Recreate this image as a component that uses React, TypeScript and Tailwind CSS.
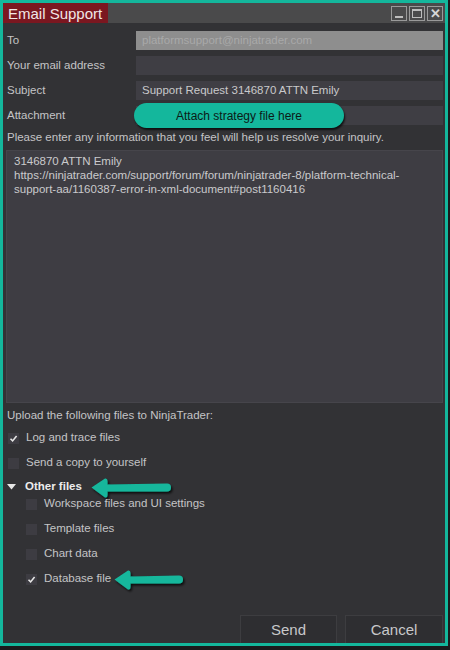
import React from "react";

const font = { fontFamily: '"Liberation Sans", Arial, sans-serif' };

// teal callout arrow pointing left, with a soft drop shadow
function Arrow({ w }: { w: number }) {
  return (
    <svg width={w} height={22} viewBox={`0 0 ${w} 22`} className="overflow-visible">
      <defs>
        <filter id="sh" x="-20%" y="-40%" width="140%" height="180%">
          <feDropShadow dx="1.5" dy="2" stdDeviation="1.2" floodColor="#000" floodOpacity="0.75" />
        </filter>
      </defs>
      <path
        filter="url(#sh)"
        fill="#14b79c"
        d={`M0.5 10.5 L14 1.5 Q16.5 1 16.5 4 L16.5 7.5 L${w - 4} 6.5 Q${w} 6.5 ${w} 10.5 Q${w} 14.5 ${w - 4} 14.5 L16.5 14.5 L16.5 18 Q16.5 21 14 20.5 Z`}
      />
    </svg>
  );
}

function Check({ checked }: { checked?: boolean }) {
  return (
    <span className="flex h-[11px] w-[11px] items-center justify-center bg-[#3d3c42]">
      {checked && (
        <svg width="9" height="9" viewBox="0 0 9 9">
          <path d="M1.5 4.8 L3.6 6.9 L7.6 2" fill="none" stroke="#e6e6e6" strokeWidth="1.6" />
        </svg>
      )}
    </span>
  );
}

function Field({ label, value, disabled }: { label: string; value?: string; disabled?: boolean }) {
  return (
    <div className="flex h-[19px] items-center">
      <div className="w-[133px] pl-[4px] text-[11.5px] text-[#c4c4c6]">{label}</div>
      <div
        className={
          disabled
            ? "flex h-full w-[307px] items-center bg-[#8e8e8e] pl-[6px] text-[11.5px] text-[#a9a9a9]"
            : "flex h-full w-[307px] items-center bg-[#3f3e44] pl-[6px] text-[11.5px] text-[#c9c9cb]"
        }
      >
        {value}
      </div>
    </div>
  );
}

export default function App() {
  return (
    <div className="h-[650px] w-[450px] bg-[#1b1b1c]" style={font}>
      <div className="flex h-[646px] w-[448px] flex-col border-[3px] border-[#14b79c] bg-[#323235]">
        {/* title bar */}
        <div className="flex h-[20px] items-center bg-[#4a4a4b]">
          <div className="flex h-full w-[105px] items-center bg-[#7b1720] pl-[5px] text-[15px] leading-none text-[#f0e6e6]">
            Email Support
          </div>
          <div className="ml-auto flex gap-[2px] pr-[2px]">
            <span className="flex h-[15px] w-[16px] items-end justify-center border border-[#9a9a9a] pb-[2px]">
              <span className="h-[2px] w-[8px] bg-[#bdbdbd]" />
            </span>
            <span className="flex h-[15px] w-[16px] items-center justify-center border border-[#9a9a9a]">
              <span className="h-[9px] w-[10px] border border-t-2 border-[#bdbdbd]" />
            </span>
            <span className="flex h-[15px] w-[16px] items-center justify-center border border-[#9a9a9a] text-[13px] font-bold leading-none text-[#d6d6d6]">
              ✕
            </span>
          </div>
        </div>

        {/* form */}
        <div className="mt-[8px] flex flex-col gap-[6px]">
          <Field label="To" value="platformsupport@ninjatrader.com" disabled />
          <Field label="Your email address" />
          <Field label="Subject" value="Support Request 3146870 ATTN Emily" />
          <div className="relative">
            <Field label="Attachment" />
            <div className="absolute left-[131px] top-[-3px] flex h-[25px] w-[210px] items-center justify-center rounded-full bg-[#14b79c] text-[12px] text-[#0c1a17] shadow-[1px_2px_2px_rgba(0,0,0,0.7)]">
              Attach strategy file here
            </div>
          </div>
        </div>

        <div className="mt-[4px] pl-[4px] text-[11.5px] leading-[16px] text-[#c4c4c6]">
          Please enter any information that you feel will help us resolve your inquiry.
        </div>

        <div className="ml-[3px] mr-[2px] mt-[5px] h-[253px] border border-[#46454b] bg-[#3e3d43] px-[7px] pt-[3px] text-[11.5px] leading-[14px] text-[#cacacc]">
          3146870 ATTN Emily
          <br />
          https://ninjatrader.com/support/forum/forum/ninjatrader-8/platform-technical-
          <br />
          support-aa/1160387-error-in-xml-document#post1160416
        </div>

        {/* uploads */}
        <div className="mt-[4px] pl-[4px] text-[11.5px] leading-[16px] text-[#c4c4c6]">
          Upload the following files to NinjaTrader:
        </div>
        <div className="mt-[7px] flex h-[16px] items-center gap-[7px] pl-[5px] text-[11.5px] text-[#c4c4c6]">
          <Check checked /> Log and trace files
        </div>
        <div className="mt-[9px] flex h-[16px] items-center gap-[7px] pl-[5px] text-[11.5px] text-[#c4c4c6]">
          <Check /> Send a copy to yourself
        </div>
        <div className="mt-[8px] flex h-[16px] items-center pl-[4px] text-[11.5px] font-bold text-[#ececec]">
          <svg width="10" height="6" viewBox="0 0 10 6" className="mr-[8px]">
            <path d="M0 0 H9 L4.5 5.5 Z" fill="#e6e6e6" />
          </svg>
          Other files
          <span className="ml-[9px] mt-[1px]">
            <Arrow w={80} />
          </span>
        </div>
        <div className="flex flex-col pl-[23px] text-[11.5px] text-[#c4c4c6]">
          <div className="mt-[1px] flex h-[16px] items-center gap-[7px]">
            <Check /> Workspace files and UI settings
          </div>
          <div className="mt-[9px] flex h-[16px] items-center gap-[7px]">
            <Check /> Template files
          </div>
          <div className="mt-[9px] flex h-[16px] items-center gap-[7px]">
            <Check /> Chart data
          </div>
          <div className="mt-[9px] flex h-[16px] items-center gap-[7px]">
            <Check checked /> Database file
            <span className="ml-[-4px] mt-[1px]">
              <Arrow w={69} />
            </span>
          </div>
        </div>

        {/* buttons */}
        <div className="mt-auto flex justify-end gap-[8px] pr-[2px]">
          <button className="h-[28px] w-[97px] border border-b-0 border-[#3d3d40] bg-[#2e2e31] pt-[2px] text-[15px] text-[#c8c8ca]">
            Send
          </button>
          <button className="h-[28px] w-[98px] border border-b-0 border-[#3d3d40] bg-[#2e2e31] pt-[2px] text-[15px] text-[#c8c8ca]">
            Cancel
          </button>
        </div>
      </div>
    </div>
  );
}
